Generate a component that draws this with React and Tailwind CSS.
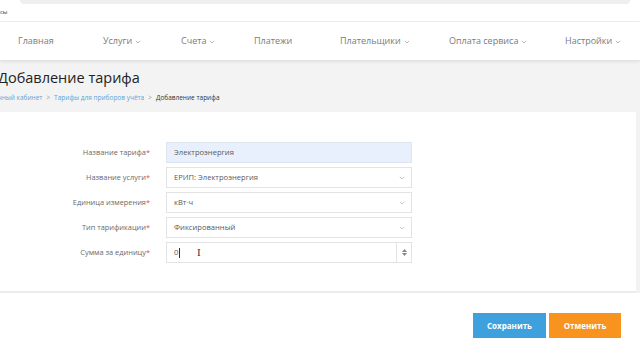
import React from "react";

const Chevron = () => (
  <svg width="6" height="4" viewBox="0 0 6 4" className="ml-[3px] mt-[2px]">
    <path d="M0.8 0.8 L3 3 L5.2 0.8" fill="none" stroke="#aaa" strokeWidth="0.8" />
  </svg>
);

const SelChevron = () => (
  <svg width="6" height="4" viewBox="0 0 6 4">
    <path d="M0.8 0.8 L3 3 L5.2 0.8" fill="none" stroke="#bbb" strokeWidth="0.8" />
  </svg>
);

function NavItem({ label, chevron, className }) {
  return (
    <div className={"flex items-center whitespace-nowrap shrink-0 " + (className || "")}>
      <span>{label}</span>
      {chevron && <Chevron />}
    </div>
  );
}

function Row({ label, children }) {
  return (
    <div className="flex items-center h-[21px]">
      <div className="w-[151px] text-right text-[7.4px] text-[#6a6a6a] pr-[1px] whitespace-nowrap">
        {label}
        <span className="text-[#e05050]">*</span>
      </div>
      <div className="ml-[15px] w-[246px] h-full">{children}</div>
    </div>
  );
}

function Select({ value }) {
  return (
    <div className="h-full border border-[#e3e3e3] bg-white flex items-center justify-between pl-[7px] pr-[6px] text-[7.6px] text-[#5a5a5a]">
      <span>{value}</span>
      <SelChevron />
    </div>
  );
}

export default function App() {
  return (
    <div
      className="w-[640px] h-[360px] overflow-hidden bg-[#f3f3f3] relative"
      style={{ fontFamily: '"Open Sans", "Noto Sans", sans-serif' }}
    >
      {/* top strip */}
      <div className="h-[22px] bg-white relative border-b border-[#ececec]">
        <div className="absolute left-[20px] right-[10px] top-0 h-[4px] bg-[#efefef] rounded-b-[4px]" />
        <div className="absolute left-0 top-[9px] text-[6px] text-[#333] leading-none">сы</div>
      </div>
      {/* nav */}
      <div className="h-[38px] bg-white shadow-[0_2px_3px_rgba(0,0,0,0.08)] flex items-center text-[9px] text-[#7a7a7a] relative pl-[18px]">
        <NavItem label="Главная" className="w-[85px]" />
        <NavItem label="Услуги" chevron className="w-[78px]" />
        <NavItem label="Счета" chevron className="w-[73px]" />
        <NavItem label="Платежи" className="w-[86px]" />
        <NavItem label="Плательщики" chevron className="w-[109px]" />
        <NavItem label="Оплата сервиса" chevron className="w-[116px]" />
        <NavItem label="Настройки" chevron className="w-[60px]" />
      </div>
      {/* title */}
      <div className="pt-[7px]">
        <div className="text-[14.5px] leading-[22px] text-[#222] -ml-[2px] whitespace-nowrap">Добавление тарифа</div>
        <div className="mt-[4px] text-[6.5px] leading-[10px] -ml-[11px] flex items-center whitespace-nowrap">
          <span className="text-[#5aa6d8]">Личный кабинет</span>
          <span className="text-[#999] mx-[4px]">&gt;</span>
          <span className="text-[#5aa6d8]">Тарифы для приборов учёта</span>
          <span className="text-[#999] mx-[4px]">&gt;</span>
          <span className="text-[#333]">Добавление тарифа</span>
        </div>
      </div>
      {/* card */}
      <div className="mt-[9px] w-[636px] h-[181px] bg-white border-b-2 border-[#ececec] pt-[30px] flex flex-col gap-[4px]">
        <Row label="Название тарифа">
          <div className="h-full border border-[#dfe6ef] bg-[#e8f0fe] flex items-center pl-[7px] text-[7.6px] text-[#5a5a5a]">
            Электроэнергия
          </div>
        </Row>
        <Row label="Название услуги">
          <Select value="ЕРИП: Электроэнергия" />
        </Row>
        <Row label="Единица измерения">
          <Select value="кВт·ч" />
        </Row>
        <Row label="Тип тарификации">
          <Select value="Фиксированный" />
        </Row>
        <Row label="Сумма за единицу">
          <div className="h-full border border-[#e3e3e3] bg-white flex items-stretch text-[7.6px] text-[#5a5a5a]">
            <div className="flex-1 flex items-center pl-[7px] relative">
              <span>0</span>
              <span className="w-[1px] h-[10px] bg-[#333] ml-[1px]" />
              <span className="absolute left-[30px] top-[3px] text-[11px] leading-[12px] text-[#333]" style={{ fontFamily: '"Liberation Serif", serif' }}>I</span>
            </div>
            <div className="w-[15px] border-l border-[#e3e3e3] flex flex-col items-center justify-center gap-[1px]">
              <svg width="5" height="3" viewBox="0 0 5 3"><path d="M0 3 L2.5 0 L5 3Z" fill="#7a8a9a" /></svg>
              <svg width="5" height="3" viewBox="0 0 5 3"><path d="M0 0 L2.5 3 L5 0Z" fill="#7a8a9a" /></svg>
            </div>
          </div>
        </Row>
      </div>
      {/* footer */}
      <div className="bg-white h-[80px] flex justify-end items-start pt-[20px] pr-[19px] gap-[3px]">
        <button className="w-[73px] h-[25px] bg-[#3ea1dd] text-white text-[8px] font-bold">Сохранить</button>
        <button className="w-[72px] h-[25px] bg-[#f7931e] text-white text-[8px] font-bold">Отменить</button>
      </div>
    </div>
  );
}
